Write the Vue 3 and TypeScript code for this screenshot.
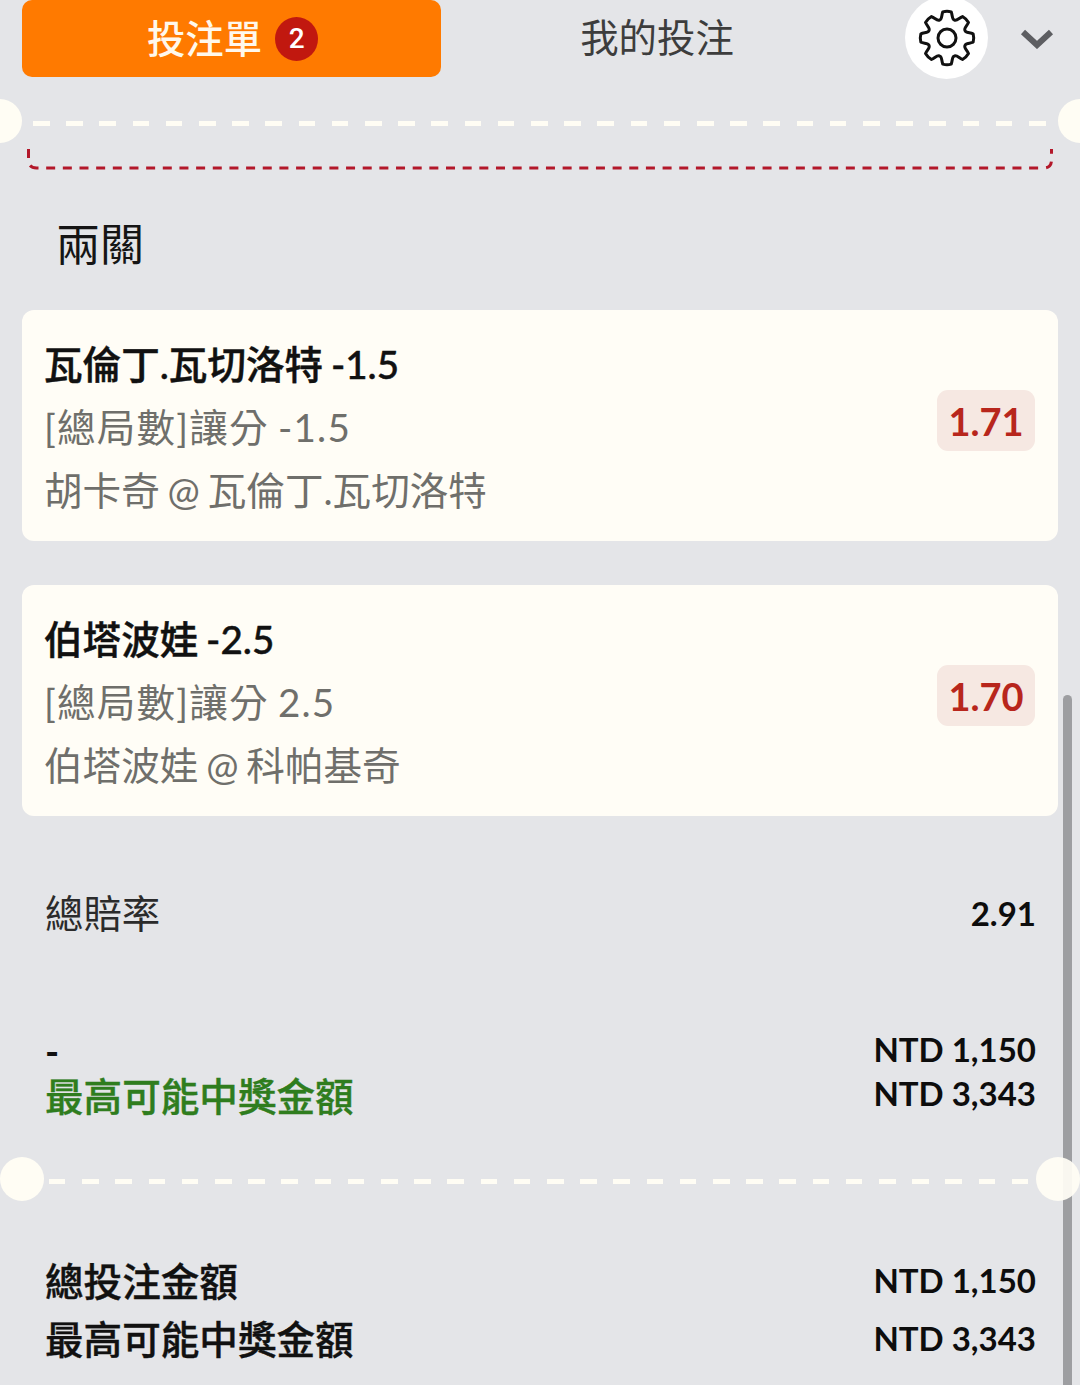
<script setup lang="ts">
interface Leg { title: string; market: string; match: string; odds: string }
const legs: Leg[] = [
  { title: '瓦倫丁.瓦切洛特 -1.5', market: '[總局數]讓分 -1.5', match: '胡卡奇 @ 瓦倫丁.瓦切洛特', odds: '1.71' },
  { title: '伯塔波娃 -2.5', market: '[總局數]讓分 2.5', match: '伯塔波娃 @ 科帕基奇', odds: '1.70' },
]
const pt = (a: number, r: number) => `${(30 + r * Math.sin(a)).toFixed(2)} ${(30 - r * Math.cos(a)).toFixed(2)}`
const gearPath = (() => {
  let d = ''
  const n = 8
  const outer = 26.5
  const inner = 19.5
  for (let i = 0; i < n; i++) {
    const a = (i * 2 * Math.PI) / n
    const start = pt(a - Math.PI / n, inner)
    d += i === 0 ? `M${start}` : ''
    d += `C${pt(a - 0.26, inner - 0.5)} ${pt(a - 0.24, outer - 3)} ${pt(a - 0.16, outer)}`
    d += `Q${pt(a, outer + 0.8)} ${pt(a + 0.16, outer)}`
    d += `C${pt(a + 0.24, outer - 3)} ${pt(a + 0.26, inner - 0.5)} ${pt(a + Math.PI / n, inner)}`
  }
  return d + 'Z'
})()
</script>

<template>
  <div class="page">
    <header class="header">
      <div class="tab-active">
        <span class="tab-label">投注單</span>
        <span class="count">2</span>
      </div>
      <div class="tab">我的投注</div>
      <div class="gear">
        <svg width="60" height="60" viewBox="0 0 60 60" fill="none" stroke="#111" stroke-width="3">
          <path :d="gearPath" stroke-linejoin="round" />
          <circle cx="30" cy="30" r="9" />
        </svg>
      </div>
      <svg class="chevron" width="34" height="20" viewBox="0 0 34 20" fill="none">
        <path d="M3 3L17 16L31 3" stroke="#5d5e62" stroke-width="6" />
      </svg>
    </header>

    <div class="perf perf-top">
      <i class="hole hole-l"></i>
      <div class="dashes"></div>
      <i class="hole hole-r"></i>
    </div>

    <svg class="red-edge" width="1080" height="27" viewBox="0 0 1080 27" fill="none">
      <path d="M28.5 6V17Q28.5 25 36.5 25H1043.5Q1051.5 25 1051.5 17V6" stroke="#b3182a" stroke-width="3" stroke-dasharray="9 7.66" />
    </svg>

    <h2 class="section">兩關</h2>

    <div class="legs">
      <article v-for="leg in legs" :key="leg.title" class="card">
        <div class="card-text">
          <div class="card-title">{{ leg.title }}</div>
          <div class="card-sub market">{{ leg.market }}</div>
          <div class="card-sub">{{ leg.match }}</div>
        </div>
        <div class="odds">{{ leg.odds }}</div>
      </article>
    </div>

    <div class="row row-odds">
      <span class="regular">總賠率</span>
      <b class="num">2.91</b>
    </div>

    <div class="stake">
      <div class="row line">
        <b class="dash">-</b>
        <b class="num">NTD 1,150</b>
      </div>
      <div class="row line">
        <span class="green">最高可能中獎金額</span>
        <b class="num">NTD 3,343</b>
      </div>
    </div>

    <div class="perf perf-bottom">
      <i class="hole hole-l"></i>
      <div class="dashes"></div>
      <i class="hole hole-r"></i>
    </div>

    <div class="totals">
      <div class="row total"><b class="strong">總投注金額</b><b class="num">NTD 1,150</b></div>
      <div class="row total"><b class="strong">最高可能中獎金額</b><b class="num">NTD 3,343</b></div>
    </div>

    <div class="scrollbar"></div>
  </div>
</template>

<style scoped>
.page {
  position: relative;
  width: 1080px;
  height: 1385px;
  overflow: hidden;
  background: #e4e5e8;
  color: #111;
  font-family: Lato, "Noto Sans CJK TC", sans-serif;
}
.header {
  display: flex;
  align-items: flex-start;
  height: 76px;
  padding-left: 22px;
}
.tab-active {
  display: flex;
  align-items: center;
  justify-content: center;
  gap: 13px;
  width: 419px;
  height: 77px;
  padding-left: 2px;
  box-sizing: border-box;
  border-radius: 10px;
  background: #ff7a00;
  color: #fff8ec;
  font-size: 38.4px;
  font-weight: 500;
}
.tab-label {
  margin-top: -5px;
}
.count {
  display: flex;
  align-items: center;
  justify-content: center;
  width: 43px;
  height: 44px;
  border-radius: 50%;
  background: #c1180f;
  color: #fff;
  font-family: Roboto, sans-serif;
  font-size: 28px;
  font-weight: 500;
}
.tab {
  width: 432px;
  height: 76px;
  line-height: 74px;
  text-align: center;
  color: #3d3d3d;
  font-size: 38.4px;
}
.gear {
  display: flex;
  align-items: center;
  justify-content: center;
  width: 83px;
  height: 83px;
  flex: none;
  margin: -4px 0 0 32px;
  border-radius: 50%;
  background: #fff;
}
.chevron {
  flex: none;
  margin: 29px 0 0 32px;
}
.perf {
  position: relative;
  height: 44px;
}
.perf-top {
  margin-top: 23px;
}
.perf-bottom {
  margin-top: 42px;
}
.dashes {
  position: absolute;
  top: 22px;
  height: 5px;
  background: repeating-linear-gradient(90deg, #fffdf4 0 16.5px, transparent 16.5px 33.2px);
}
.perf-top .dashes {
  left: 33px;
  width: 1015px;
}
.perf-bottom .dashes {
  left: 49px;
  width: 982px;
}
.hole {
  position: absolute;
  z-index: 2;
  top: 0;
  width: 44px;
  height: 44px;
  border-radius: 50%;
  background: #fffdf4;
}
.perf-top .hole-l { left: -22px; }
.perf-top .hole-r { right: -22px; }
.perf-bottom .hole-l { left: 0; }
.perf-bottom .hole-r { right: 0; background: rgba(255, 253, 244, 0.94); }
.red-edge {
  display: block;
}
.section {
  margin: 44px 0 0;
  padding-left: 56px;
  font-size: 44px;
  font-weight: 400;
  line-height: 60px;
  color: #151515;
}
.legs {
  display: flex;
  flex-direction: column;
  gap: 44px;
  margin: 36px 22px 0;
}
.card {
  display: flex;
  justify-content: space-between;
  align-items: flex-start;
  height: 231px;
  box-sizing: border-box;
  padding: 23px 23px 19px 22px;
  border-radius: 12px;
  background: #fffdf6;
}
.card-title {
  font-size: 38.6px;
  font-weight: 500;
  -webkit-text-stroke: 0.45px #111;
  line-height: 63px;
  word-spacing: -2px;
  color: #111;
}
.card-sub {
  font-size: 38.6px;
  line-height: 63px;
  word-spacing: -2px;
  color: #6f6f6b;
}
.market {
  letter-spacing: 1.2px;
}
.odds {
  display: flex;
  align-items: center;
  justify-content: center;
  width: 98px;
  height: 61px;
  margin-top: 57px;
  border-radius: 11px;
  background: #f6e8e2;
  color: #b8261c;
  font-size: 38px;
  font-weight: 700;
}
.row {
  display: flex;
  justify-content: space-between;
  align-items: center;
  padding: 0 44px 0 45px;
}
.row-odds {
  height: 60px;
  margin-top: 67px;
}
.regular {
  margin-top: -4px;
  font-size: 38.4px;
  color: #2b2b2b;
}
.num {
  font-size: 33px;
  font-weight: 700;
  color: #0d0d0d;
}
.stake {
  margin-top: 84px;
}
.line {
  height: 44px;
}
.dash {
  font-size: 38px;
  position: relative;
  top: 2px;
}
.green {
  position: relative;
  top: 1px;
  font-size: 38.6px;
  font-weight: 500;
  -webkit-text-stroke: 0.4px #2f7d1e;
  color: #2f7d1e;
}
.totals {
  margin-top: 51px;
}
.total {
  height: 58px;
}
.total .num {
  position: relative;
  top: -1px;
}
.strong {
  margin-top: -4px;
  font-size: 38.6px;
  font-weight: 500;
  -webkit-text-stroke: 0.4px #111;
}
.scrollbar {
  position: absolute;
  z-index: 1;
  top: 695px;
  bottom: 0;
  left: 1063px;
  width: 9px;
  border-radius: 5px 5px 0 0;
  background: #9d9ea1;
}
</style>
